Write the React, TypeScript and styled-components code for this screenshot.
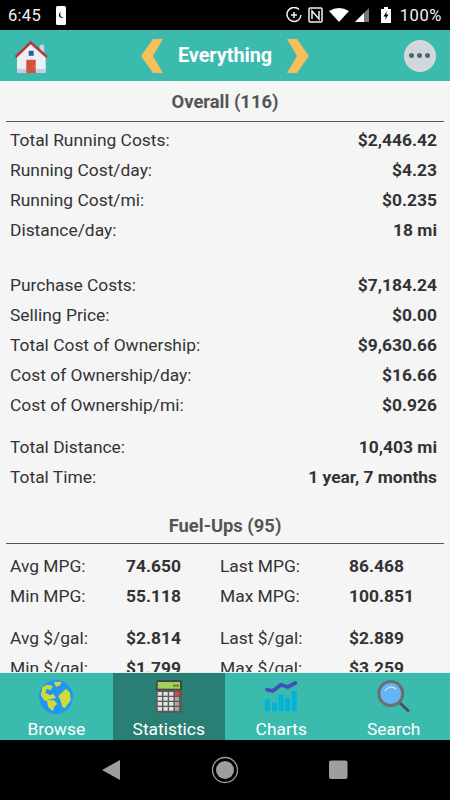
import React, { FC } from 'react'
import styled, { createGlobalStyle } from 'styled-components'

const GlobalStyle = createGlobalStyle`
    html, body {
        margin: 0;
        padding: 0;
        background: #000;
    }
    * {
        box-sizing: border-box;
    }
`
const StyledPhone = styled.div`
    width: 450px;
    height: 800px;
    display: flex;
    flex-direction: column;
    overflow: hidden;
    font-family: Roboto, "Liberation Sans", sans-serif;
    background: #f5f5f5;
`
const StyledStatusBar = styled.div`
    height: 30px;
    flex: none;
    background: #000;
    color: #f2f2f2;
    display: flex;
    align-items: center;
    justify-content: space-between;
    padding: 0 8px;
    font-size: 16.5px;
`
const StyledStatusGroup = styled.div`
    display: flex;
    align-items: center;
    gap: 6px;
`
const StyledTime = styled.span`
    letter-spacing: 0.3px;
    margin-right: 9px;
`
const StyledPercent = styled.span`
    letter-spacing: 0.6px;
    margin-left: 3px;
`
const StyledHeader = styled.header`
    height: 51px;
    flex: none;
    background: #3bbaae;
    display: flex;
    align-items: center;
    justify-content: space-between;
    padding: 0 14px;
`
const StyledSwitcher = styled.div`
    display: flex;
    align-items: center;
    gap: 14px;
    margin-right: 4px;
`
const StyledTitle = styled.h1`
    margin: 0;
    color: #fff;
    font-size: 19.8px;
    font-weight: 700;
`
const StyledMore = styled.div`
    width: 32px;
    height: 32px;
    border-radius: 50%;
    background: #d0d8dc;
    display: flex;
    align-items: center;
    justify-content: center;
    gap: 3px;
`
const StyledDot = styled.span`
    width: 5px;
    height: 5px;
    border-radius: 50%;
    background: #54666f;
`
const StyledContent = styled.main`
    flex: 1;
    min-height: 0;
    overflow: hidden;
    padding: 10px 6px 0;
    color: #333;
    font-size: 17.4px;
`
const StyledSectionTitle = styled.div<{ $top?: number }>`
    height: 31px;
    border-bottom: 1px solid #555;
    text-align: center;
    font-weight: 700;
    font-size: 18.4px;
    color: #555;
    line-height: 22px;
    padding-top: ${p => p.$top ?? 0}px;
`
const StyledRows = styled.div<{ $gap: number; $top?: number }>`
    margin-top: ${p => p.$top ?? 0}px;
    padding: 0 7px 0 4px;
    margin-bottom: ${p => p.$gap}px;
`
const StyledRow = styled.div`
    height: 30px;
    display: flex;
    align-items: center;
    justify-content: space-between;
`
const StyledValue = styled.span`
    font-weight: 700;
`
const StyledFuelGrid = styled.div<{ $gap: number; $top?: number }>`
    display: grid;
    grid-template-columns: 116px 94px 129px 1fr;
    grid-auto-rows: 30px;
    align-items: center;
    padding-left: 4px;
    margin-top: ${p => p.$top ?? 0}px;
    margin-bottom: ${p => p.$gap}px;
`
const StyledTabBar = styled.nav`
    height: 68px;
    flex: none;
    background: #3bbaae;
    display: grid;
    grid-template-columns: repeat(4, 1fr);
    border-top: 1px solid #e4efee;
`
const StyledTab = styled.div<{ $active?: boolean }>`
    background: ${p => (p.$active ? '#297f74' : 'transparent')};
    color: #fff;
    font-size: 17.4px;
    line-height: 20px;
    display: flex;
    flex-direction: column;
    align-items: center;
    padding-top: 6px;
    svg {
        height: 36px;
        width: 36px;
        margin-bottom: 4px;
    }
`
const StyledNavBar = styled.div`
    height: 60px;
    flex: none;
    background: #000;
    display: flex;
    align-items: center;
    justify-content: center;
    gap: 90px;
`

type IRow = [string, string]

const costRows: IRow[] = [
    ['Total Running Costs:', '$2,446.42'],
    ['Running Cost/day:', '$4.23'],
    ['Running Cost/mi:', '$0.235'],
    ['Distance/day:', '18 mi'],
]
const ownershipRows: IRow[] = [
    ['Purchase Costs:', '$7,184.24'],
    ['Selling Price:', '$0.00'],
    ['Total Cost of Ownership:', '$9,630.66'],
    ['Cost of Ownership/day:', '$16.66'],
    ['Cost of Ownership/mi:', '$0.926'],
]
const totalRows: IRow[] = [
    ['Total Distance:', '10,403 mi'],
    ['Total Time:', '1 year, 7 months'],
]
const mpgRows: string[][] = [
    ['Avg MPG:', '74.650', 'Last MPG:', '86.468'],
    ['Min MPG:', '55.118', 'Max MPG:', '100.851'],
]
const priceRows: string[][] = [
    ['Avg $/gal:', '$2.814', 'Last $/gal:', '$2.889'],
    ['Min $/gal:', '$1.799', 'Max $/gal:', '$3.259'],
]

const Rows: FC<{ rows: IRow[]; gap: number; top?: number }> = ({ rows, gap, top }) => (
    <StyledRows $gap={gap} $top={top}>
        {rows.map(([label, value]) => (
            <StyledRow key={label}>
                <span>{label}</span>
                <StyledValue>{value}</StyledValue>
            </StyledRow>
        ))}
    </StyledRows>
)

const FuelGrid: FC<{ rows: string[][]; gap: number; top?: number }> = ({ rows, gap, top }) => (
    <StyledFuelGrid $gap={gap} $top={top}>
        {rows.map(row => (
            <React.Fragment key={row[0]}>
                <span>{row[0]}</span>
                <StyledValue>{row[1]}</StyledValue>
                <span>{row[2]}</span>
                <StyledValue>{row[3]}</StyledValue>
            </React.Fragment>
        ))}
    </StyledFuelGrid>
)

const HouseIcon = () => (
    <svg width="36" height="36" viewBox="0 0 36 36">
        <rect x="25.7" y="6.8" width="4.5" height="9" fill="#cfd3e4" />
        <path d="M3 18 L16.7 5 L31.7 18 V35 H3 Z" fill="#eceef6" />
        <rect x="3" y="31" width="28.7" height="4" fill="#c6cbe3" />
        <path d="M1.6 19 L16.7 4.6 L33 19" fill="none" stroke="#b83a36" strokeWidth="2.6" />
        <rect x="14.7" y="12.8" width="5" height="5" fill="#2c5e9e" />
        <rect x="12.3" y="21.8" width="9.4" height="13.2" fill="#d3523c" />
        <rect x="19.6" y="27.5" width="1" height="1.6" fill="#eba58f" />
    </svg>
)

const Chevron: FC<{ right?: boolean }> = ({ right }) => (
    <svg width="24" height="36" viewBox="0 0 24 36">
        <path d={right ? 'M1 1 H11 L23 18 L11 35 H1 L11 18 Z' : 'M23 1 H13 L1 18 L13 35 H23 L13 18 Z'} fill="#f6bf5b" />
    </svg>
)

const GlobeIcon = () => (
    <svg viewBox="0 0 36 36">
        <circle cx="18" cy="18" r="17" fill="#2196f3" />
        <path d="M4.7 8 L9.3 5.7 L14.7 7 L12.7 11.3 L8.7 9.7 L7.3 13.7 L12 16.3 L15.3 14.7 L18 19 L12 20.3 L7 22.3 L2.7 16.3 Z" fill="#cddc39" />
        <path d="M8.7 21.3 L16 21.3 L19.3 24.7 L16 28 L14.7 32.3 L10.3 28 Z" fill="#cddc39" />
        <path d="M20.3 17 L28 9.7 L32 13.7 L32.7 21.3 L27 29 L24.3 28 L22.7 22.3 Z" fill="#cddc39" />
        <path d="M16 3 L23.7 3 L22 6.3 L18 8 Z" fill="#cddc39" />
    </svg>
)

const CalculatorIcon = () => (
    <svg viewBox="0 0 36 36">
        <rect x="5" y="1" width="26" height="33" rx="3" fill="#5a5a5a" />
        <path d="M5 11 V4 A3 3 0 0 1 8 1 H28 A3 3 0 0 1 31 4 V11 Z" fill="#454545" />
        <rect x="6.7" y="3" width="22.3" height="6.7" fill="#a5cf5b" />
        <rect x="22.5" y="5.6" width="2" height="2" fill="#4a5a30" />
        <rect x="25.5" y="5.6" width="2" height="2" fill="#4a5a30" />
        {[0, 1, 2, 3].map(r =>
            [0, 1, 2, 3].map(c => (
                <rect
                    key={`${r}-${c}`}
                    x={6.7 + c * 5.7}
                    y={13 + r * 5}
                    width="4.3"
                    height="3.7"
                    fill={r === 0 && c === 3 ? '#f44336' : c === 3 ? '#a8a8a8' : '#e2e2e2'}
                />
            )),
        )}
    </svg>
)

const ChartIcon = () => (
    <svg viewBox="0 0 36 36">
        <path d="M2 20.3 H7 V32.3 H2 Z M9 23.7 H14 V32.3 H9 Z M15.7 15.7 H20.7 V32.3 H15.7 Z M22 18.7 H27 V32.3 H22 Z M28.7 12 H33.7 V32.3 H28.7 Z" fill="#00b4d8" />
        <path d="M4 10.7 L9.7 12 L18 5.7 L24.7 8 L32.3 4" fill="none" stroke="#3f51b5" strokeWidth="3.8" strokeLinecap="round" strokeLinejoin="round" />
    </svg>
)

const SearchIcon = () => (
    <svg viewBox="0 0 36 36">
        <line x1="23" y1="23" x2="33" y2="32.5" stroke="#4a5257" strokeWidth="3" />
        <circle cx="14.75" cy="14.5" r="12" fill="#64b5f6" stroke="#6a6f73" strokeWidth="3" />
        <path d="M9 12 A7 7 0 0 1 20 10" fill="none" stroke="#cfe8fc" strokeWidth="1.2" />
    </svg>
)

const App: FC = (): JSX.Element => (
    <StyledPhone>
        <GlobalStyle />
        <StyledStatusBar>
            <StyledStatusGroup>
                <StyledTime>6:45</StyledTime>
                <svg width="10" height="19" viewBox="0 0 10 19">
                    <rect width="10" height="19" rx="1.5" fill="#fff" />
                    <path d="M5 6 A3 3 0 1 0 8 11 A3 3 0 0 1 5 6 Z" fill="#000" />
                </svg>
            </StyledStatusGroup>
            <StyledStatusGroup>
                <svg width="16" height="16" viewBox="0 0 16 16" fill="none" stroke="#f2f2f2" strokeWidth="1.5">
                    <path d="M13 2.5 A7 7 0 1 0 15 8" />
                    <path d="M8 5 V11 M5 8 H11" />
                </svg>
                <svg width="15" height="16" viewBox="0 0 15 16" fill="none" stroke="#f2f2f2" strokeWidth="1.5">
                    <rect x="1" y="1" width="13" height="14" rx="1" />
                    <path d="M4 12 V4 L11 12 V4" />
                </svg>
                <svg width="20" height="14" viewBox="0 0 20 14">
                    <path d="M0 3 Q10 -3 20 3 L10 14 Z" fill="#fff" />
                </svg>
                <svg width="14" height="14" viewBox="0 0 14 14">
                    <path d="M0 14 L14 0 V14 Z" fill="#777" />
                    <path d="M0 14 L9 5 V14 Z" fill="#fff" />
                </svg>
                <svg width="10" height="16" viewBox="0 0 10 16" style={{ marginLeft: 6 }}>
                    <path d="M3 0 H7 V2 H10 V16 H0 V2 H3 Z" fill="#fff" />
                    <path d="M6 4 L2.5 9.5 H4.8 L4 13 L7.5 7.5 H5.2 Z" fill="#000" />
                </svg>
                <StyledPercent>100%</StyledPercent>
            </StyledStatusGroup>
        </StyledStatusBar>
        <StyledHeader>
            <HouseIcon />
            <StyledSwitcher>
                <Chevron />
                <StyledTitle>Everything</StyledTitle>
                <Chevron right />
            </StyledSwitcher>
            <StyledMore>
                <StyledDot />
                <StyledDot />
                <StyledDot />
            </StyledMore>
        </StyledHeader>
        <StyledContent>
            <StyledSectionTitle>Overall (116)</StyledSectionTitle>
            <Rows rows={costRows} gap={25} top={3} />
            <Rows rows={ownershipRows} gap={12} />
            <Rows rows={totalRows} gap={21} />
            <StyledSectionTitle $top={2}>Fuel-Ups (95)</StyledSectionTitle>
            <FuelGrid rows={mpgRows} gap={12} top={7} />
            <FuelGrid rows={priceRows} gap={0} />
        </StyledContent>
        <StyledTabBar>
            <StyledTab>
                <GlobeIcon />
                Browse
            </StyledTab>
            <StyledTab $active>
                <CalculatorIcon />
                Statistics
            </StyledTab>
            <StyledTab>
                <ChartIcon />
                Charts
            </StyledTab>
            <StyledTab>
                <SearchIcon />
                Search
            </StyledTab>
        </StyledTabBar>
        <StyledNavBar>
            <svg width="20" height="20" viewBox="0 0 20 20">
                <path d="M19 0 V20 L1 10 Z" fill="#9e9e9e" />
            </svg>
            <svg width="28" height="28" viewBox="0 0 28 28">
                <circle cx="14" cy="14" r="12.5" fill="none" stroke="#9e9e9e" strokeWidth="1.3" />
                <circle cx="14" cy="14" r="9" fill="#9e9e9e" />
            </svg>
            <svg width="20" height="20" viewBox="0 0 20 20">
                <rect x="0" y="0.5" width="18.5" height="18.5" rx="2" fill="#9e9e9e" />
            </svg>
        </StyledNavBar>
    </StyledPhone>
)

export default App
